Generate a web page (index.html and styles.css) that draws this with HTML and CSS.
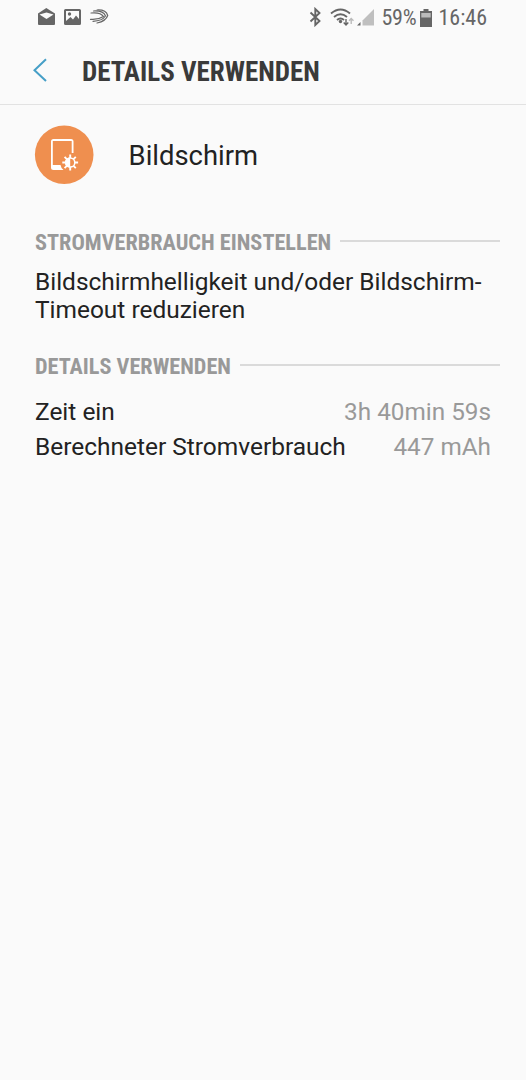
FILE: index.html
```html
<!DOCTYPE html>
<html lang="de">
<head>
<meta charset="utf-8">
<title>Details verwenden</title>
<link rel="stylesheet" href="styles.css">
</head>
<body>
<div class="status">
  <svg class="notif" width="76" height="20" viewBox="36 7 76 20">
    <path fill="#666" d="M46.300 8 55 13.500v10.500q0 1-1 1H39q-1 0-1-1V13.500Z"/>
    <path fill="#fafafa" d="M39.500 14.500 46.500 12.500 53.500 14.500 46.500 19Z"/>
    <path fill="#666" fill-rule="evenodd" d="M65.500 9H79.500Q81 9 81 10.500V23.500Q81 25 79.500 25H65.500Q64 25 64 23.500V10.500Q64 9 65.500 9ZM66 11V21L70.500 17 73 19.500 76 15.500 79 19V11Z"/>
    <circle cx="69.500" cy="14" r="1.700" fill="#666"/>
    <g fill="none" stroke="#666" stroke-linecap="round" stroke-width="1.200">
      <path d="M97 10Q106 9.500 107.700 15.500Q106 21 97 23"/>
      <path d="M93.500 11Q103.500 10.500 105.500 16Q102 21 93 21.300"/>
      <path d="M91 13Q100.500 12 103.500 16.500Q98 20 90.500 19.300"/>
    </g>
  </svg>
  <svg class="signals" width="68" height="20" viewBox="309 7 68 20">
    <path fill="none" stroke="#666" stroke-width="1.900" d="M311.500 12.500 320.500 21 316.300 25V9L320.500 13 311.500 21.500"/>
    <g fill="none" stroke="#666" stroke-width="1.900">
      <path d="M332 13.500Q341.500 5.500 351 13.500M335 17Q341.500 11.500 348 17M338 20Q341.500 17 345 20"/>
    </g>
    <circle cx="341.500" cy="21.500" r="1.700" fill="#666"/>
    <path fill="none" stroke="#666" stroke-width="1.400" d="M347 19V25M344.700 22.500 347 25 349.300 22.500"/>
    <path fill="none" stroke="#bbb" stroke-width="1.400" d="M352.200 24V18.500M350 20.800 352.200 18.500 354.500 20.800"/>
    <path fill="#666" d="M358 25.500 361.500 22V25.500Z"/>
    <path fill="#bfbfbf" d="M363.500 25.500V20.500L375 9V25.500Z"/>
  </svg>
  <span class="percent">59%</span>
  <svg class="battery" width="12" height="18" viewBox="0 0 12 18">
    <path fill="#666" d="M3.500 0H8.500V2H12V18H0V2H3.500Z"/>
    <path fill="#bbb" d="M1.300 4H10.700V8.500H1.300Z"/>
  </svg>
  <span class="clock">16:46</span>
</div>
<header class="bar">
  <svg class="back" width="16" height="24" viewBox="32 58 16 24"><path fill="none" stroke="#469fc7" stroke-width="2" d="M46 59.300 34.500 70.200 46 81"/></svg>
  <h1 class="title">DETAILS VERWENDEN</h1>
</header>
<main>
  <div class="item">
    <svg width="60" height="60" viewBox="34 125 60 60">
      <circle cx="64.200" cy="154.800" r="29.300" fill="#ef8f4f"/>
      <path fill="#fff" fill-rule="evenodd" d="M53.500 139H71Q73.500 139 73.500 141.500V153H71.700V141H52.800V165H60.500Q61 168 63.500 170H53.500Q51 170 51 167.500V141.500Q51 139 53.500 139Z"/>
      <circle cx="70.200" cy="162.500" r="4.600" fill="none" stroke="#fff" stroke-width="1.500"/>
      <path fill="#fff" d="M70.200 157.500A5 5 0 0 0 70.200 167.500Z"/>
      <path stroke="#fff" stroke-width="1.900" d="M70.200 154.600V158M70.200 167V170.400M62.300 162.500H65.500M75 162.500H78.100M64.600 156.900 67 159.300M73.500 165.800 75.800 168.100M75.800 156.900 73.500 159.200M67 165.700 64.600 168.100"/>
    </svg>
    <span class="name">Bildschirm</span>
  </div>
  <h2 class="section adjust">STROMVERBRAUCH EINSTELLEN</h2>
  <p class="advice">Bildschirmhelligkeit und/oder Bildschirm-<br>Timeout reduzieren</p>
  <h2 class="section usage">DETAILS VERWENDEN</h2>
  <dl class="rows">
    <div class="row"><dt>Zeit ein</dt><dd>3h 40min 59s</dd></div>
    <div class="row"><dt>Berechneter Stromverbrauch</dt><dd>447 mAh</dd></div>
  </dl>
</main>
</body>
</html>
```
FILE: styles.css
```css
* { box-sizing: border-box; margin: 0; padding: 0; }
body {
  min-height: 1080px;
  background: #fafafa;
  color: #222;
  font-family: Roboto, sans-serif;
}
svg { display: block; flex: none; }
.status {
  display: flex;
  align-items: center;
  height: 36px;
  padding: 1px 39px 1px 36px;
  color: #666;
  font: 22px/34px "Roboto Condensed", Roboto, sans-serif;
  white-space: nowrap;
}
.notif, .signals { margin-top: -2px; }
.signals { margin-left: auto; }
.percent { margin-left: 5px; letter-spacing: -0.2px; }
.battery { margin: -1px 6px 0 4px; }
.bar {
  display: flex;
  align-items: center;
  height: 69px;
  padding: 0 32px;
  border-bottom: 1.500px solid #e2e2e2;
}
.title {
  margin-left: 34px;
  padding-top: 3px;
  color: #3a3a3a;
  font: 700 27px/32px "Roboto Condensed", Roboto, sans-serif;
}
.item {
  display: flex;
  align-items: center;
  height: 60px;
  margin: 20px 34px 0;
}
.name {
  margin-left: 34.600px;
  padding-top: 2px;
  font-size: 27.400px;
  line-height: 32px;
}
.section {
  display: flex;
  align-items: center;
  height: 28px;
  margin: 0 26px 0 35px;
  color: #999;
  font: 700 22.250px/28px "Roboto Condensed", Roboto, sans-serif;
  white-space: nowrap;
}
.section::after {
  content: "";
  flex: 1;
  height: 2px;
  margin: -2px 0 0 9px;
  background: #dadada;
}
.adjust { margin-top: 43px; }
.advice {
  margin: 12px 35px 0;
  font-size: 24.440px;
  line-height: 28px;
  white-space: nowrap;
}
.usage { margin-top: 28px; }
.rows {
  margin: 14px 35px 0;
  font-size: 24.460px;
  line-height: 35px;
  white-space: nowrap;
}
.row { display: flex; justify-content: space-between; }
.row dd { color: #999; font-size: 24.300px; }
```
